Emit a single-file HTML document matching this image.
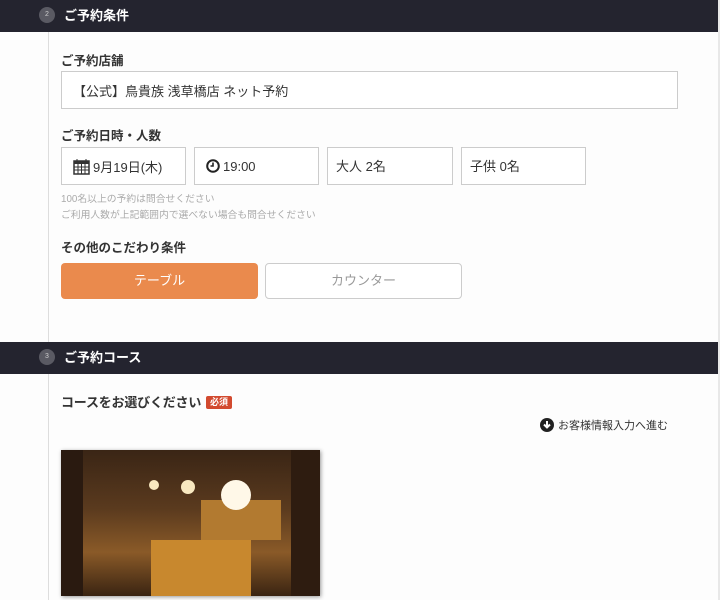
<!DOCTYPE html>
<html><head><meta charset="utf-8"><style>
*{margin:0;padding:0;box-sizing:border-box}
body{width:720px;height:600px;background:#fdfdfd;font-family:"Liberation Sans","Noto Sans CJK JP",sans-serif;position:relative;overflow:hidden;color:#333}
.bar{position:absolute;left:0;width:718px;height:32px;background:#24242f;color:#fff;font-weight:bold;font-size:13px}
.bar .n{position:absolute;left:39px;top:7px;width:16px;height:16px;border-radius:50%;background:#5a5a63;color:#ccc;font-size:7px;text-align:center;line-height:16px;font-weight:normal}
.bar .t{position:absolute;left:64px;top:5px}
.vl{position:absolute;left:48px;width:1px;background:#ddd}
.lbl{position:absolute;left:61px;font-size:12.5px;font-weight:bold;color:#333}
.box{position:absolute;border:1px solid #ccc;background:#fff;font-size:13px;color:#333;padding-left:11px;display:flex;align-items:center}
.note{position:absolute;left:61px;font-size:9.8px;color:#aaa}
</style></head><body>
<div style="position:absolute;right:0;top:0;width:2px;height:600px;background:#e8e8e8"></div>
<div class="bar" style="top:0"><div class="n">2</div><div class="t">ご予約条件</div></div>
<div class="vl" style="top:32px;height:310px"></div>
<div class="lbl" style="top:50px">ご予約店舗</div>
<div class="box" style="left:61px;top:71px;width:617px;height:38px">【公式】鳥貴族 浅草橋店 ネット予約</div>
<div class="lbl" style="top:125px">ご予約日時・人数</div>
<div class="box" style="left:61px;top:147px;width:125px;height:38px;padding-left:11px">
<svg width="17" height="17" viewBox="0 0 17 17" style="margin-right:3px"><rect x="1" y="3" width="15" height="13" fill="none" stroke="#333" stroke-width="1.5"/><rect x="1" y="3" width="15" height="3" fill="#333"/><path d="M4 1v3M13 1v3M1 9h15M1 12h15M5 6v10M8.5 6v10M12 6v10" stroke="#333" stroke-width="1"/></svg>9月19日(木)</div>
<div class="box" style="left:194px;top:147px;width:125px;height:38px">
<svg width="14" height="14" viewBox="0 0 14 14" style="margin-right:3px"><circle cx="7" cy="7" r="5.8" fill="none" stroke="#222" stroke-width="2"/><path d="M7 3.5V7H4.5" fill="none" stroke="#222" stroke-width="1.6"/></svg>19:00</div>
<div class="box" style="left:327px;top:147px;width:126px;height:38px;padding-left:8px;align-items:flex-start;padding-top:8px">大人 2名</div>
<div class="box" style="left:461px;top:147px;width:125px;height:38px;padding-left:8px;align-items:flex-start;padding-top:8px">子供 0名</div>
<div class="note" style="top:191px">100名以上の予約は問合せください</div>
<div class="note" style="top:207px">ご利用人数が上記範囲内で選べない場合も問合せください</div>
<div class="lbl" style="top:237px">その他のこだわり条件</div>
<div style="position:absolute;left:61px;top:263px;width:197px;height:36px;background:#ea8a4d;border-radius:4px;color:#fff;font-size:13px;text-align:center;line-height:36px">テーブル</div>
<div style="position:absolute;left:265px;top:263px;width:197px;height:36px;background:#fff;border:1px solid #ccc;border-radius:4px;color:#999;font-size:13px;text-align:center;line-height:34px">カウンター</div>
<div class="bar" style="top:342px"><div class="n">3</div><div class="t">ご予約コース</div></div>
<div class="vl" style="top:374px;height:226px"></div>
<div style="position:absolute;left:61px;top:392px;font-size:13px;letter-spacing:-0.2px;font-weight:bold;color:#333;white-space:nowrap">コースをお選びください</div>
<div style="position:absolute;left:206px;top:396px;width:26px;height:13px;background:#d24a2f;border-radius:2px;color:#fff;font-size:9px;text-align:center;line-height:13px;font-weight:bold">必須</div>
<div style="position:absolute;left:540px;top:417px;font-size:11px;color:#333;display:flex;align-items:center;white-space:nowrap">
<svg width="14" height="14" viewBox="0 0 14 14" style="margin-right:4px"><circle cx="7" cy="7" r="7" fill="#222"/><path d="M7 3v6M4 6.5l3 3 3-3" fill="none" stroke="#fff" stroke-width="2"/></svg>お客様情報入力へ進む</div>
<div style="position:absolute;left:61px;top:450px;width:259px;height:146px;box-shadow:1px 1px 4px rgba(0,0,0,.4);overflow:hidden;background:linear-gradient(180deg,#3a2515 0%,#5a3a1e 40%,#8a5a28 70%,#3a2412 100%)">
<div style="position:absolute;left:90px;top:90px;width:100px;height:56px;background:#c8882e"></div>
<div style="position:absolute;left:140px;top:50px;width:80px;height:40px;background:#b27a30"></div>
<div style="position:absolute;left:0;top:0;width:22px;height:146px;background:#2a1a10"></div>
<div style="position:absolute;left:230px;top:0;width:29px;height:146px;background:#2e1c10"></div>
<div style="position:absolute;left:160px;top:30px;width:30px;height:30px;border-radius:50%;background:#fff8e8"></div>
<div style="position:absolute;left:120px;top:30px;width:14px;height:14px;border-radius:50%;background:#f8e8c0"></div>
<div style="position:absolute;left:88px;top:30px;width:10px;height:10px;border-radius:50%;background:#f8e8c0"></div>
</div>
</body></html>
